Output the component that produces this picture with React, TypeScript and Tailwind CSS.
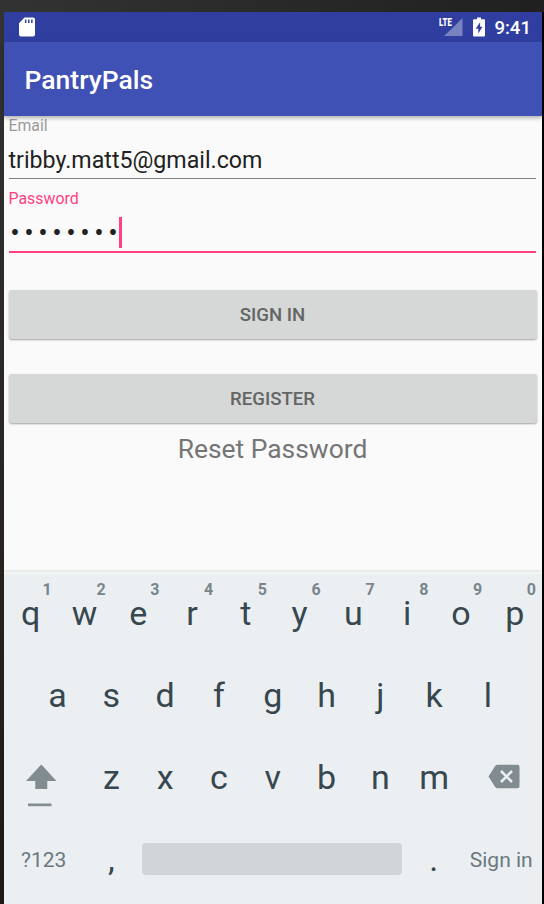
import React from "react";

const topRow = ["q", "w", "e", "r", "t", "y", "u", "i", "o", "p"];
const middleRow = ["a", "s", "d", "f", "g", "h", "j", "k", "l"];
const bottomRow = ["z", "x", "c", "v", "b", "n", "m"];

function Key({ label, hint }: { label: string; hint?: string }) {
  return (
    <div className="relative flex w-[53.8px] shrink-0 justify-center pr-[.5px] text-[34px] leading-[40px] text-[#37474f]">
      {label}
      {hint && (
        <span className="absolute -top-[13px] right-[6px] text-[16px] leading-[20px] font-bold text-[#78868b]">
          {hint}
        </span>
      )}
    </div>
  );
}

function StatusBar() {
  return (
    <div className="flex h-[30px] items-center bg-[#303f9f] pr-[11px] pl-[15px] text-white">
      <svg width="16" height="20" viewBox="0 0 16 20">
        <path
          fillRule="evenodd"
          fill="white"
          d="M5.5 .5H14q2 0 2 2V17.5q0 2-2 2H2q-2 0-2-2V6.2ZM5.9 2.5V6H7.4V2.5ZM9 2.5V6H10.5V2.5ZM12.1 2.5V6H13.6V2.5Z"
        />
      </svg>
      <div className="ml-auto flex items-center">
        <div className="relative h-[18px] w-[24px]">
          <svg className="absolute inset-0" width="24" height="18" viewBox="0 0 24 18">
            <path d="M23.5 0V18H5L13.5 10V10Z" fill="#7983c0" />
            <path d="M0 0H14V9H0Z" fill="#303f9f" />
          </svg>
          <span className="absolute -top-px left-0 origin-left scale-x-[.68] text-[11.5px] leading-[11px] font-black">
            LTE
          </span>
        </div>
        <svg className="ml-[10px]" width="12" height="20" viewBox="0 0 12 20">
          <path d="M4 .5H8V2.3H11Q12 2.3 12 3.3V18.5Q12 19.5 11 19.5H1Q0 19.5 0 18.5V3.3Q0 2.3 1 2.3H4Z" fill="white" />
          <path d="M7.1 5.2 2.7 11.8H5.3V16.5L9.5 9.7H7.1Z" fill="#303f9f" />
        </svg>
        <span className="ml-[9px] pt-px text-[18.6px] leading-[30px] font-medium">9:41</span>
      </div>
    </div>
  );
}

function Keyboard() {
  return (
    <div className="flex h-[332px] flex-col border-t-2 border-[#f4f6f6] bg-[#eceff1] pt-[18.5px] shadow-[0_-1px_3px_rgba(0,0,0,0.12)]">
      <div className="flex h-[82px]">
        {topRow.map((k, i) => (
          <Key key={k} label={k} hint={String((i + 1) % 10)} />
        ))}
      </div>
      <div className="flex h-[82px] justify-center">
        {middleRow.map((k) => (
          <Key key={k} label={k} />
        ))}
      </div>
      <div className="flex h-[82.5px]">
        <div className="w-[80.7px] pt-[7.5px] pl-[21px]">
          <svg width="32" height="44" viewBox="0 0 32 44">
            <path d="M16.3 .5 31.5 17H22.3V25H10.3V17H1Z" fill="#818c90" />
            <path d="M3 39.5H26.5V42.2H3Z" fill="#818c90" />
          </svg>
        </div>
        {bottomRow.map((k) => (
          <Key key={k} label={k} />
        ))}
        <div className="pt-[7px] pl-[26.5px]">
          <svg width="32" height="25" viewBox="0 0 32 25">
            <path d="M9.5 .7H29.5Q31.5 .7 31.5 2.7V22.3Q31.5 24.3 29.5 24.3H9.5Q8 24.3 7.2 23L.5 12.5 7.2 2Q8 .7 9.5 .7Z" fill="#818c90" />
            <path d="M13 7 24 18M24 7 13 18" stroke="#eceff1" strokeWidth="2.6" />
          </svg>
        </div>
      </div>
      <div className="flex">
        <div className="w-[80.7px] pt-[8px] pl-[17px] text-[21px] leading-[26px] text-[#6a797f]">?123</div>
        <Key label="," />
        <div className="mt-[4px] ml-[4px] h-[32px] w-[260px] rounded-[4px] bg-[#d1d5d8]" />
        <div className="ml-[4.5px]">
          <Key label="." />
        </div>
        <div className="pt-[8px] pl-[9px] text-[21px] leading-[26px] whitespace-nowrap text-[#6a797f]">Sign in</div>
      </div>
    </div>
  );
}

const buttonClass =
  "mr-[5.5px] ml-[4.5px] flex h-[49px] items-center justify-center rounded-[3px] bg-[#d6d8d7] pt-[3px] text-[18.6px] font-medium text-[#636564] shadow-[0_1px_2px_rgba(0,0,0,0.35)]";

export default function App() {
  return (
    <div className="h-[904px] w-[544px] overflow-hidden bg-linear-to-b from-[#333333] to-[#1f1a17] font-['Roboto',sans-serif]">
      <div className="h-[12px] bg-linear-to-r from-[#333333] to-[#202020]" />
      <div className="ml-[4px] flex h-[892px] w-[540px] flex-col border-r-2 border-black bg-[#fafafa]">
        <StatusBar />
        <div className="z-10 flex h-[73.5px] items-center bg-[#3f51b5] pt-[3px] pl-[20.5px] text-[26.5px] leading-[32px] font-medium text-white shadow-[0_2px_4px_rgba(0,0,0,0.3)]">
          PantryPals
        </div>
        <div className="flex h-[456.5px] flex-col">
          <div className="pr-[6px] pl-[4.5px]">
            <div className="h-[30.5px] text-[15.8px] leading-[20px] text-[#9a9a9a]">Email</div>
            <div className="h-[33px] border-b border-[#808080] text-[23.2px] leading-[29px] text-[#212121]">
              tribby.matt5@gmail.com
            </div>
            <div className="mt-[9.5px] h-[28.5px] text-[15.9px] leading-[20px] text-[#ff4081]">Password</div>
            <div className="flex h-[36px] items-start border-b-2 border-[#ff4081]">
              <span className="w-[110.5px] pl-[1.8px] text-[28px] leading-[32px] tracking-[4.55px] whitespace-nowrap text-[#212121]">
                ••••••••
              </span>
              <span className="h-[31px] w-[2.5px] bg-[#ff4081]" />
            </div>
          </div>
          <button className={buttonClass + " mt-[37px]"}>SIGN IN</button>
          <button className={buttonClass + " mt-[35px]"}>REGISTER</button>
          <div className="mt-[10px] pr-px text-center text-[26.4px] leading-[32px] text-[#757575]">Reset Password</div>
        </div>
        <Keyboard />
      </div>
    </div>
  );
}
